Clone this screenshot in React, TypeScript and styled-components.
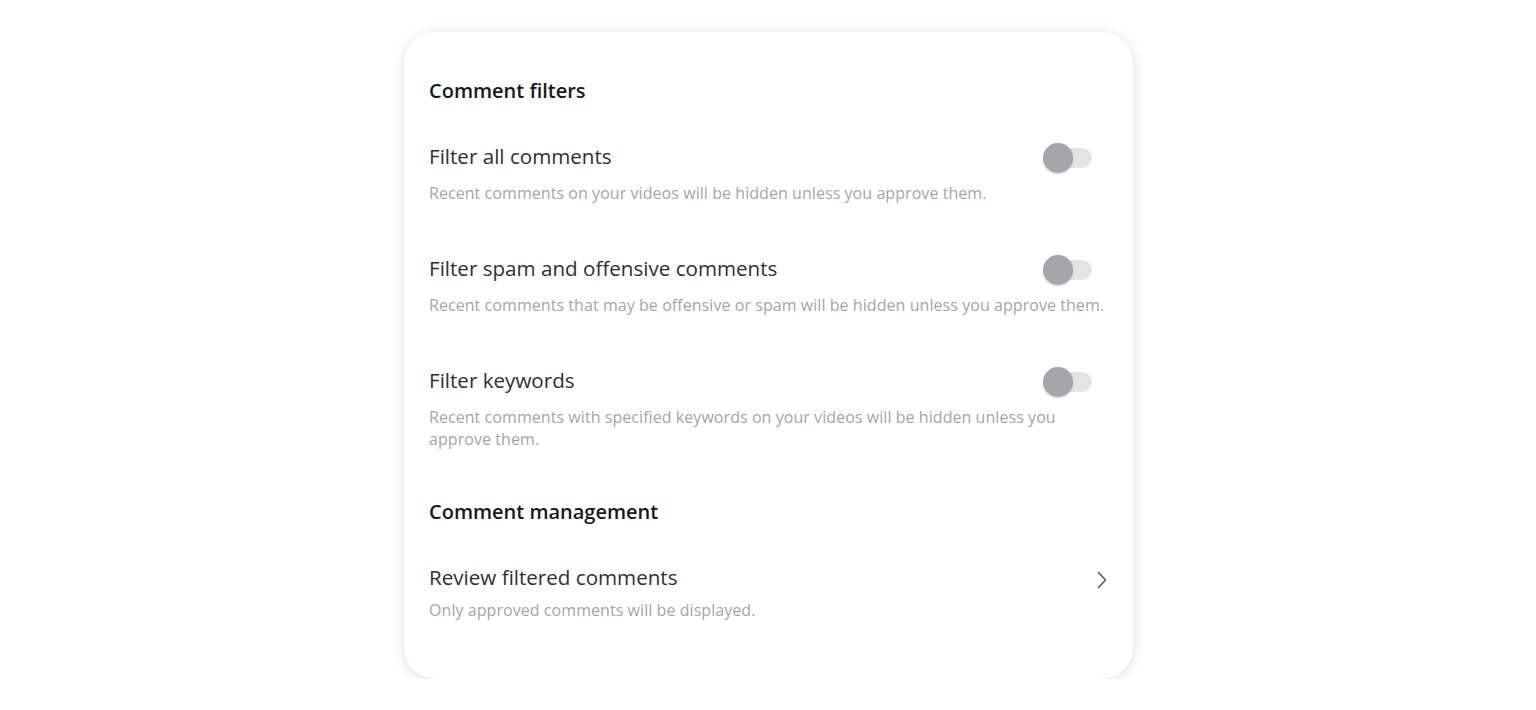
import styled, { createGlobalStyle } from 'styled-components'

const GlobalStyle = createGlobalStyle`
  body {
    margin: 0;
    background: #fff;
    font-family: "Open Sans", Lato, sans-serif;
  }
`

type Item = {
  title: string
  desc: string
}

const filters: Item[] = [
  {
    title: 'Filter all comments',
    desc: 'Recent comments on your videos will be hidden unless you approve them.',
  },
  {
    title: 'Filter spam and offensive comments',
    desc: 'Recent comments that may be offensive or spam will be hidden unless you approve them.',
  },
  {
    title: 'Filter keywords',
    desc: 'Recent comments with specified keywords on your videos will be hidden unless you approve them.',
  },
]

export default function App () {
  return (
    <>
      <GlobalStyle />
      <Page>
        <Card>
          <Heading>Comment filters</Heading>
          <FilterList>
            {filters.map(item => (
              <Setting key={item.title}>
                <TitleRow>
                  <Title>{item.title}</Title>
                  <Switch aria-label={item.title}>
                    <Knob />
                  </Switch>
                </TitleRow>
                <Desc>{item.desc}</Desc>
              </Setting>
            ))}
          </FilterList>

          <Heading>Comment management</Heading>
          <Setting $tight>
            <TitleRow>
              <Title>Review filtered comments</Title>
              <Chevron viewBox="0 0 12 20" aria-hidden>
                <path d="M2.5 2.5 L9.5 10 L2.5 17.5" />
              </Chevron>
            </TitleRow>
            <Desc>Only approved comments will be displayed.</Desc>
          </Setting>
        </Card>
      </Page>
    </>
  )
}

const Page = styled.main`
  display: flex;
  justify-content: center;
  padding: 32px 0 0 1px;
`;

const Card = styled.section`
  width: 729px;
  box-sizing: border-box;
  padding: 47px 25px 58px;
  background: #fff;
  border-radius: 32px;
  box-shadow: 0 2px 14px rgba(0, 0, 0, 0.13);
  display: flex;
  flex-direction: column;
`;

const Heading = styled.h2`
  margin: 0;
  font-size: 20px;
  line-height: 24px;
  font-weight: 600;
  color: #161823;
`;

const FilterList = styled.div`
  display: flex;
  flex-direction: column;
  gap: 51px;
  margin: 40px 0 50px;
`;

const Setting = styled.div<{ $tight?: boolean }>`
  display: flex;
  flex-direction: column;
  gap: ${p => (p.$tight ? '9px' : '13px')};
  margin-top: ${p => (p.$tight ? '40px' : '0')};
`;

const TitleRow = styled.div`
  display: flex;
  align-items: center;
  justify-content: space-between;
  height: 26px;
`;

const Title = styled.span`
  font-size: 20.6px;
  line-height: 26px;
  color: #2f2f35;
`;

const Desc = styled.p`
  margin: 0;
  font-size: 16px;
  line-height: 22px;
  letter-spacing: 0.06px;
  color: #a5a5aa;
`;

const Switch = styled.div`
  position: relative;
  width: 42px;
  height: 20px;
  margin-right: 16px;
  margin-top: 4px;
  border-radius: 10px;
  background: #e4e4e7;
`;

const Knob = styled.span`
  position: absolute;
  left: -7px;
  top: -5px;
  width: 30px;
  height: 30px;
  border-radius: 50%;
  background: #a6a5ab;
  box-shadow: 0 1px 3px rgba(0, 0, 0, 0.18);
`;

const Chevron = styled.svg`
  width: 12px;
  height: 20px;
  margin-top: 6px;
  fill: none;
  stroke: #5a5a60;
  stroke-width: 1.6;
  stroke-linecap: round;
  stroke-linejoin: round;
`;
